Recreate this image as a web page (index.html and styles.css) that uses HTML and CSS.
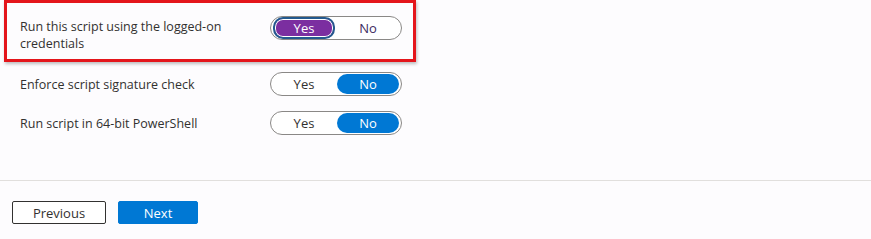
FILE: index.html
```html
<!DOCTYPE html>
<html>
<head>
<meta charset="utf-8">
<link rel="stylesheet" href="styles.css">
</head>
<body>
<div class="page">
  <div class="settings">
    <div class="highlight">
      <div class="row row-top">
        <div class="label">Run this script using the logged-on<br>credentials</div>
        <div class="toggle">
          <span class="seg seg-focus">Yes</span>
          <span class="seg seg-off-hover">No</span>
        </div>
      </div>
    </div>
    <div class="row">
      <div class="label">Enforce script signature check</div>
      <div class="toggle">
        <span class="seg">Yes</span>
        <span class="seg seg-on">No</span>
      </div>
    </div>
    <div class="row">
      <div class="label">Run script in 64-bit PowerShell</div>
      <div class="toggle">
        <span class="seg">Yes</span>
        <span class="seg seg-on">No</span>
      </div>
    </div>
  </div>
  <div class="footer">
    <button class="btn btn-secondary">Previous</button>
    <button class="btn btn-primary">Next</button>
  </div>
</div>
</body>
</html>
```
FILE: styles.css
```css
html, body {
  margin: 0;
  padding: 0;
  background: #fdfcfe;
}
body {
  font-family: "Open Sans", "Noto Sans", "Liberation Sans", sans-serif;
  font-size: 12.5px;
  color: #323130;
  width: 871px;
  height: 239px;
  overflow: hidden;
}
.settings {
  border-bottom: 1px solid #e1dfdd;
  box-sizing: border-box;
  height: 181px;
}
.highlight {
  margin-left: 4px;
  width: 412px;
  height: 62px;
  box-sizing: border-box;
  border: 3px solid #e4151b;
  box-shadow: 1px 2px 3px rgba(0,0,0,0.25);
  padding: 13px 0 0 13px;
}
.row {
  display: grid;
  grid-template-columns: 250px 132px;
  align-items: center;
  padding-left: 20px;
  margin-top: 10px;
}
.row + .row {
  margin-top: 15px;
}
.highlight .row {
  padding-left: 0;
  margin-top: 0;
  align-items: start;
}
.row-top .label {
  padding-top: 2px;
}
.label {
  line-height: 17px;
}
.toggle {
  display: grid;
  grid-template-columns: 62px 62px;
  column-gap: 2px;
  height: 24px;
  box-sizing: border-box;
  border: 1px solid #8a8886;
  border-radius: 12px;
  padding: 1px 2px;
  background: #fff;
}
.seg {
  display: flex;
  align-items: center;
  justify-content: center;
  border-radius: 10px;
  font-size: 13px;
  color: #323130;
  box-sizing: border-box;
}
.seg-on {
  background: #0078d4;
  color: #fff;
}
.seg-focus {
  background: #7b2ea0;
  color: #fff;
  border: 2px solid #23598e;
  box-shadow: inset 0 0 0 1px #fff;
  margin: -1px 0;
}
.seg-off-hover {
  color: #3b2b5e;
}
.footer {
  display: flex;
  gap: 12px;
  padding: 20px 0 0 12px;
}
.btn {
  height: 23px;
  font-family: inherit;
  font-size: 13px;
  border-radius: 2px;
  padding: 0;
  cursor: pointer;
}
.btn-secondary {
  width: 94px;
  background: #fff;
  border: 1px solid #323130;
  color: #323130;
}
.btn-primary {
  width: 80px;
  background: #0078d4;
  border: 1px solid #0078d4;
  color: #fff;
}
```
